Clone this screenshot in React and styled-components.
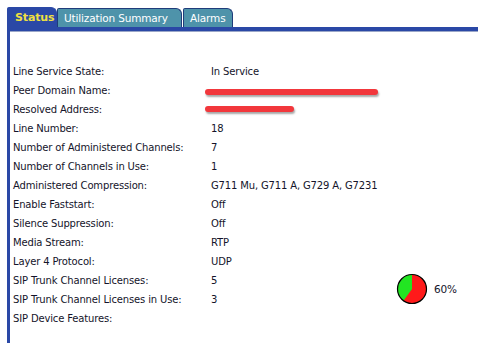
import React from "react"
import styled, { createGlobalStyle } from "styled-components"

const GlobalStyle = createGlobalStyle`
	html, body {
		margin: 0;
		padding: 0;
		background: #ffffff;
	}
	body {
		font-family: "DejaVu Sans", Tahoma, sans-serif;
		font-size: 10px;
		letter-spacing: -0.15px;
		color: #14142a;
	}
`

const rows = [
	{ label: "Line Service State:", value: "In Service" },
	{ label: "Peer Domain Name:", value: "", redact: 173, offset: -2 },
	{ label: "Resolved Address:", value: "", redact: 89, offset: -4 },
	{ label: "Line Number:", value: "18" },
	{ label: "Number of Administered Channels:", value: "7" },
	{ label: "Number of Channels in Use:", value: "1" },
	{ label: "Administered Compression:", value: "G711 Mu, G711 A, G729 A, G7231" },
	{ label: "Enable Faststart:", value: "Off" },
	{ label: "Silence Suppression:", value: "Off" },
	{ label: "Media Stream:", value: "RTP" },
	{ label: "Layer 4 Protocol:", value: "UDP" },
	{ label: "SIP Trunk Channel Licenses:", value: "5" },
	{ label: "SIP Trunk Channel Licenses in Use:", value: "3" },
	{ label: "SIP Device Features:", value: "" },
]

const Page = styled.div`
	width: 478px;
	height: 343px;
	padding: 7px 0 0 7px;
	box-sizing: border-box;
	display: flex;
	flex-direction: column;
	overflow: hidden;
`

const TabBar = styled.div`
	display: flex;
	align-items: flex-end;
	height: 20px;
	border-bottom: 4px solid #2a48a6;
	box-shadow: 0 1px 0 #9aa6c8;
`

const Tab = styled.div`
	height: ${props => props.active ? "20px" : "19px"};
	padding: 0 ${props => props.active ? "7px" : "6px"};
	margin-right: ${props => props.active ? "0" : "1px"};
	display: flex;
	align-items: center;
	box-sizing: border-box;
	background: ${props => props.active ? "#2a48a6" : "#4e93aa"};
	border: 1px solid ${props => props.active ? "#2a48a6" : "#1f3c7a"};
	border-bottom: none;
	border-radius: 2px 6px 0 0;
	color: ${props => props.active ? "#f0e040" : "#ffffff"};
	font-weight: ${props => props.active ? "bold" : "normal"};
	font-size: ${props => props.active ? "11px" : "10.5px"};
	width: ${props => props.width}px;
`

const Panel = styled.div`
	flex: 1;
	border-left: 3px solid #2a48a6;
	padding: 31px 0 0 3px;
	position: relative;
`

const Row = styled.div`
	display: grid;
	grid-template-columns: 198px 1fr;
	height: 19px;
	align-items: center;
`

const Value = styled.div`
	position: relative;
	white-space: nowrap;
`

const Redact = styled.div`
	position: absolute;
	left: -6px;
	top: ${props => props.offset}px;
	height: 6px;
	border-radius: 3px;
	background: #f2373c;
	box-shadow: 1px 2px 2px rgba(0, 0, 0, 0.35);
`

const Usage = styled.div`
	position: absolute;
	left: 386px;
	top: 242px;
	display: flex;
	align-items: center;
	gap: 6px;
	font-size: 10.5px;
`

function Pie({ percent }) {
	const a = (percent / 100) * 2 * Math.PI
	const r = 14.5
	const x = 16 + r * Math.sin(a)
	const y = 16 - r * Math.cos(a)
	return (
		<svg width="32" height="32" viewBox="0 0 32 32">
			<circle cx="16" cy="16" r={r} fill="#22e522" />
			<path d={`M16 16 L16 ${16 - r} A${r} ${r} 0 ${percent > 50 ? 1 : 0} 1 ${x} ${y} Z`} fill="#ff1a1a" />
			<circle cx="16" cy="16" r={r} fill="none" stroke="#000" strokeWidth="1.2" />
		</svg>
	)
}

export default function App() {
	return (
		<Page>
			<GlobalStyle />
			<TabBar>
				<Tab active width={50}>Status</Tab>
				<Tab width={125}>Utilization Summary</Tab>
				<Tab width={50}>Alarms</Tab>
			</TabBar>
			<Panel>
				{rows.map(row => (
					<Row key={row.label}>
						<div>{row.label}</div>
						<Value>
							{row.value}
							{row.redact && <Redact style={{ width: row.redact }} offset={row.offset} />}
						</Value>
					</Row>
				))}
				<Usage>
					<Pie percent={60} />
					<span>60%</span>
				</Usage>
			</Panel>
		</Page>
	)
}
